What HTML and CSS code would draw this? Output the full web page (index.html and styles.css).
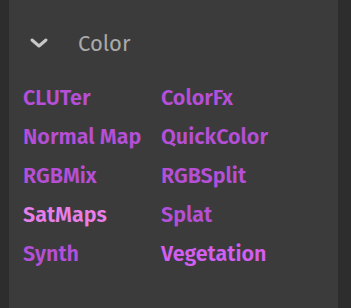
FILE: index.html
```html
<!DOCTYPE html>
<html lang="en">
<head>
  <meta charset="UTF-8">
  <title>Color</title>
  <link rel="stylesheet" href="styles.css">
</head>
<body>
  <div class="panel">
    <div class="header">
      <svg class="chev" width="20" height="12" viewBox="0 0 20 12">
        <path d="M3 3 L10 9 L17 3" fill="none" stroke="#c8c8c8" stroke-width="3" stroke-linecap="round" stroke-linejoin="round"/>
      </svg>
      <span class="title">Color</span>
    </div>
    <div class="grid">
      <a>CLUTer</a>
      <a>ColorFx</a>
      <a>Normal Map</a>
      <a>QuickColor</a>
      <a>RGBMix</a>
      <a>RGBSplit</a>
      <a class="visited">SatMaps</a>
      <a>Splat</a>
      <a>Synth</a>
      <a class="hover">Vegetation</a>
    </div>
  </div>
</body>
</html>
```
FILE: styles.css
```css
body {
  margin: 0;
  background: #2d2d2d;
  font-family: 'Fira Sans', 'Open Sans', sans-serif;
  height: 308px;
  overflow: hidden;
}
.panel {
  margin-left: 9px;
  width: 329px;
  height: 308px;
  background: #3b3b3b;
  box-sizing: border-box;
  padding-top: 30px;
}
.header {
  display: flex;
  align-items: center;
  height: 26px;
  padding-left: 20px;
}
.chev { margin-right: 29px; }
.title {
  color: #a9a9a9;
  font-size: 22px;
}
.grid {
  display: grid;
  grid-template-columns: 138px 1fr;
  padding-left: 14px;
  margin-top: 27px;
  row-gap: 9px;
}
.grid a {
  color: #b64fd8;
  font-size: 21.5px;
  font-weight: 600;
  line-height: 30px;
}
.grid a.visited { color: #e97ee9; }
.grid a.hover { color: #d35ef2; }
```
